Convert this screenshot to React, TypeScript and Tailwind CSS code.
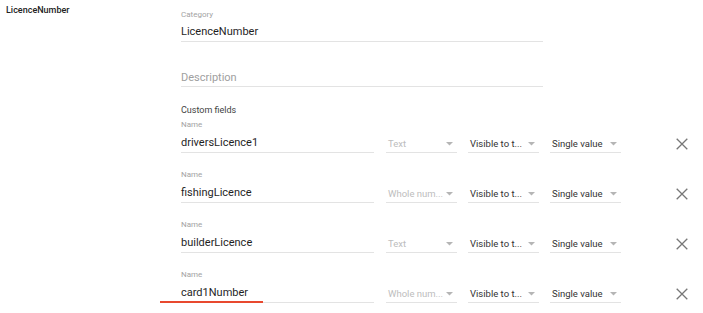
type Field = { name: string; type: string };

const fields: Field[] = [
  { name: 'driversLicence1', type: 'Text' },
  { name: 'fishingLicence', type: 'Whole num...' },
  { name: 'builderLicence', type: 'Text' },
  { name: 'card1Number', type: 'Whole num...' },
];

const Arrow = () => (
  <svg width="7" height="4" viewBox="0 0 7 4" className="shrink-0">
    <path d="M0 0 L7 0 L3.5 3.5 Z" fill="#b5b5b5" />
  </svg>
);

const Close = () => (
  <svg width="12" height="12" viewBox="0 0 12 12">
    <path d="M0.7 0.7 L11.3 11.3 M11.3 0.7 L0.7 11.3" stroke="#777" strokeWidth="1.3" />
  </svg>
);

const Select = ({ value, muted }: { value: string; muted?: boolean }) => (
  <div className="w-[71px] h-[17px] border-b border-[#e3e3e3] flex items-center justify-between pl-[2px] pr-[4px]">
    <span className={`text-[9.5px] leading-[16px] ${muted ? 'text-[#bdbdbd]' : 'text-[#333]'}`}>{value}</span>
    <Arrow />
  </div>
);

const FieldRow = ({ field, first }: { field: Field; first: boolean }) => (
  <div className={`flex items-end ${first ? 'mt-[2px]' : 'mt-[16px]'}`}>
    <div className="w-[193px]">
      <div className="text-[8px] leading-[12px] text-[#a3a3a3]">Name</div>
      <div className="pt-[4px] pb-[1px] text-[11px] leading-[16px] text-[#1f1f1f] border-b border-[#e3e3e3]">
        {field.name}
      </div>
    </div>
    <div className="flex gap-[11px] ml-[12px]">
      <Select value={field.type} muted />
      <Select value="Visible to t..." />
      <Select value="Single value" />
    </div>
    <div className="h-[18px] ml-[55px] flex items-center">
      <Close />
    </div>
  </div>
);

export default function App() {
  return (
    <div className="relative w-[703px] h-[313px] bg-white overflow-hidden flex" style={{ fontFamily: 'Roboto, "Liberation Sans", sans-serif' }}>
      <div className="w-[181px] pl-[6px] pt-[4px]">
        <div className="text-[9px] leading-[12px] font-medium text-[#222]">LicenceNumber</div>
      </div>
      <div className="flex-1 pt-[9px]">
        <div className="w-[362px]">
          <div className="text-[8px] leading-[12px] text-[#a3a3a3]">Category</div>
          <div className="pt-[3px] pb-[1px] text-[11px] leading-[16px] text-[#1f1f1f] border-b border-[#e3e3e3]">
            LicenceNumber
          </div>
        </div>
        <div className="w-[362px] mt-[28px] text-[11px] leading-[16px] text-[#a0a0a0] border-b border-[#e3e3e3]">
          Description
        </div>
        <div className="mt-[16px] text-[9px] leading-[14px] text-[#424242]">Custom fields</div>
        {fields.map((f, i) => (
          <FieldRow key={f.name} field={f} first={i === 0} />
        ))}
      </div>
      {/* red focus underline on the last name field */}
      <div className="absolute left-[160px] top-[301px] w-[103px] h-[2px] bg-[#e8492f]" />
    </div>
  );
}
